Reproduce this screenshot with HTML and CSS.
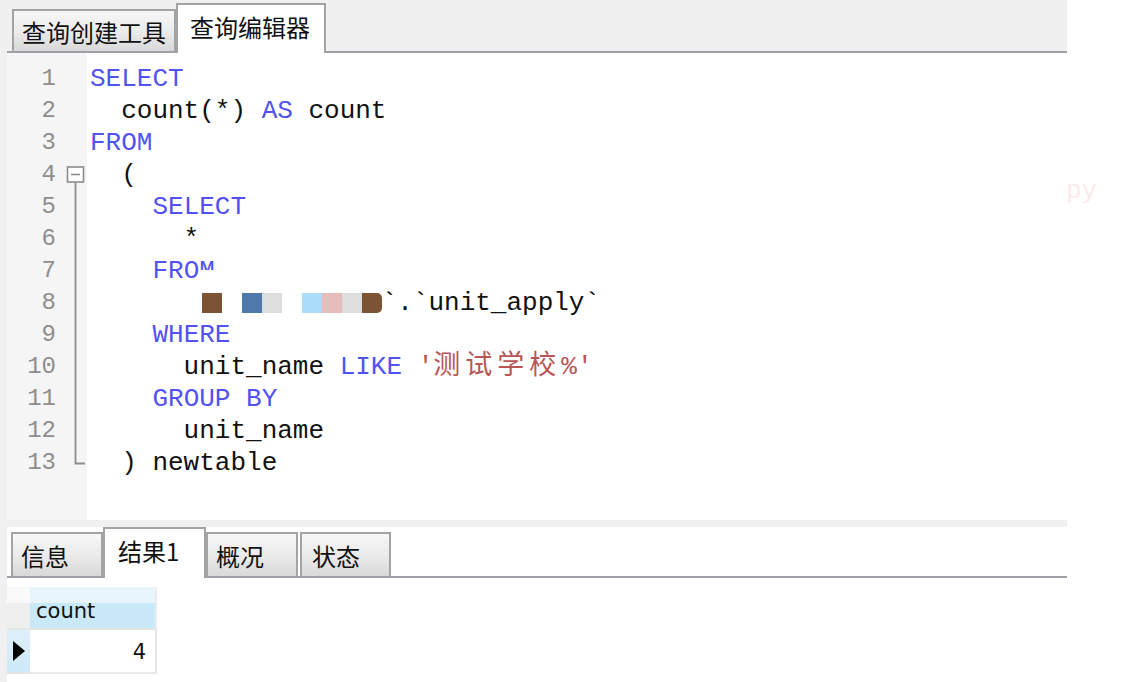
FILE: index.html
```html
<!doctype html>
<html lang="zh">

<head>
    <meta charset="utf-8">
    <title>查询编辑器</title>
    <link rel="stylesheet" href="styles.css">
</head>

<body>

    <div class="app">
        <div class="tabs tabs-top">
            <div class="tab tab-builder">查询创建工具</div>
            <div class="tab active tab-editor">查询编辑器</div>
        </div>

        <div class="editor">
            <div class="gutter">
                <div class="gline"><span class="ln">1</span><span class="fold"></span></div>
                <div class="gline"><span class="ln">2</span><span class="fold"></span></div>
                <div class="gline"><span class="ln">3</span><span class="fold"></span></div>
                <div class="gline"><span class="ln">4</span><span class="fold">
                    <svg width="31" height="32" viewBox="0 0 31 32"><rect x="11.5" y="8" width="16" height="15" fill="#fff" stroke="#8c8c8c" stroke-width="1.6"/><path d="M15 15.5H24" stroke="#8c8c8c" stroke-width="1.6"/><path d="M19.5 23V32" stroke="#8c8c8c" stroke-width="1.8"/></svg>
                </span></div>
                <div class="gline"><span class="ln">5</span><span class="fold"><svg width="31" height="32" viewBox="0 0 31 32"><path d="M19.5 0V32" stroke="#8c8c8c" stroke-width="1.8"/></svg></span></div>
                <div class="gline"><span class="ln">6</span><span class="fold"><svg width="31" height="32" viewBox="0 0 31 32"><path d="M19.5 0V32" stroke="#8c8c8c" stroke-width="1.8"/></svg></span></div>
                <div class="gline"><span class="ln">7</span><span class="fold"><svg width="31" height="32" viewBox="0 0 31 32"><path d="M19.5 0V32" stroke="#8c8c8c" stroke-width="1.8"/></svg></span></div>
                <div class="gline"><span class="ln">8</span><span class="fold"><svg width="31" height="32" viewBox="0 0 31 32"><path d="M19.5 0V32" stroke="#8c8c8c" stroke-width="1.8"/></svg></span></div>
                <div class="gline"><span class="ln">9</span><span class="fold"><svg width="31" height="32" viewBox="0 0 31 32"><path d="M19.5 0V32" stroke="#8c8c8c" stroke-width="1.8"/></svg></span></div>
                <div class="gline"><span class="ln">10</span><span class="fold"><svg width="31" height="32" viewBox="0 0 31 32"><path d="M19.5 0V32" stroke="#8c8c8c" stroke-width="1.8"/></svg></span></div>
                <div class="gline"><span class="ln">11</span><span class="fold"><svg width="31" height="32" viewBox="0 0 31 32"><path d="M19.5 0V32" stroke="#8c8c8c" stroke-width="1.8"/></svg></span></div>
                <div class="gline"><span class="ln">12</span><span class="fold"><svg width="31" height="32" viewBox="0 0 31 32"><path d="M19.5 0V32" stroke="#8c8c8c" stroke-width="1.8"/></svg></span></div>
                <div class="gline"><span class="ln">13</span><span class="fold"><svg width="31" height="32" viewBox="0 0 31 32"><path d="M19.5 0V16.5H29" fill="none" stroke="#8c8c8c" stroke-width="1.8"/></svg></span></div>
            </div>

            <div class="code">
<div class="line"><span class="kw">SELECT</span></div>
<div class="line">  count(*) <span class="kw">AS</span> count</div>
<div class="line"><span class="kw">FROM</span></div>
<div class="line">  (</div>
<div class="line">    <span class="kw">SELECT</span></div>
<div class="line">      *</div>
<div class="line">    <span class="kw">FROM</span><span class="smudge"></span></div>
<div class="line">      <span class="mask"><i class="m blank first"></i><i class="m brown"></i><i class="m blank"></i><i class="m blue"></i><i class="m grey"></i><i class="m blank"></i><i class="m sky"></i><i class="m pink"></i><i class="m grey"></i><i class="m brown last"></i></span>`.`unit_apply`</div>
<div class="line">    <span class="kw">WHERE</span></div>
<div class="line">      unit_name <span class="kw">LIKE</span> <span class="str">'<span class="cjk">测试学校</span>%'</span></div>
<div class="line">    <span class="kw">GROUP BY</span></div>
<div class="line">      unit_name</div>
<div class="line">  ) newtable</div>
            </div>
        </div>

        <div class="splitter"></div>

        <div class="tabs tabs-bottom">
            <div class="tab tab-info">信息</div>
            <div class="tab active tab-result">结果1</div>
            <div class="tab tab-profile">概况</div>
            <div class="tab tab-status">状态</div>
        </div>

        <div class="results">
            <table class="grid">
                <thead>
                    <tr>
                        <th class="corner"></th>
                        <th class="head">count</th>
                    </tr>
                </thead>
                <tbody>
                    <tr>
                        <td class="indicator"><svg width="12" height="20" viewBox="0 0 12 20"><path d="M0 0L12 10L0 20Z" fill="#000"/></svg></td>
                        <td class="cell">4</td>
                    </tr>
                </tbody>
            </table>
        </div>
    </div>

    <span class="ghost">py</span>

</body>

</html>
```

FILE: styles.css
```css
*{
    box-sizing: border-box;
}
body{
    margin: 0;
    background: #fff;
    font-family: "Noto Sans CJK SC", sans-serif;
    position: relative;
    height: 682px;
    overflow: hidden;
}
.app{
    width: 1067px;
    height: 682px;
    padding-left: 7px;
    background: #f0f0f0;
    display: flex;
    flex-direction: column;
}

/* tabs */
.tabs{
    display: flex;
    align-items: flex-end;
    border-bottom: 2px solid #9da0a5;
    flex-shrink: 0;
}
.tabs-top{
    height: 53px;
}
.tabs-bottom{
    height: 51px;
    background: #fff;
}
.tab{
    height: 42px;
    border: 2px solid #a3a3a3;
    border-bottom: 0;
    background: linear-gradient(#f7f7f7, #ebebeb 50%, #d9d9d9);
    font-size: 24px;
    color: #111;
    display: flex;
    align-items: center;
    padding-left: 8px;
    white-space: nowrap;
}
.tab.active{
    background: #fff;
    height: 50px;
    margin-bottom: -2px;
    padding-bottom: 6px;
}
.tab-builder{
    margin-left: 5px;
    width: 164px;
}
.tab-editor{
    width: 150px;
    padding-left: 12px;
}
.tabs-bottom .tab{
    height: 44px;
}
.tabs-bottom .tab.active{
    height: 51px;
    padding-bottom: 7px;
}
.tab-info{
    margin-left: 4px;
    width: 92px;
}
.tab-result{
    width: 103px;
    padding-left: 13px;
}
.tab-profile{
    width: 92px;
}
.tab-status{
    margin-left: 2px;
    width: 91px;
    padding-left: 10px;
}

/* editor */
.editor{
    height: 467px;
    display: flex;
    background: #fff;
    flex-shrink: 0;
}
.gutter{
    width: 80px;
    background: #f5f5f5;
    padding-top: 10px;
}
.gline{
    display: flex;
    height: 32px;
}
.ln{
    width: 49px;
    text-align: right;
    font: 24px/32px "Liberation Mono", monospace;
    color: #8e8e8e;
}
.fold{
    width: 31px;
    height: 32px;
}
.fold svg{
    display: block;
}
.code{
    flex: 1;
    padding-top: 10px;
    padding-left: 3px;
    font: 26px/32px "Liberation Mono", "Noto Sans CJK SC", monospace;
    color: #111;
}
.line{
    height: 32px;
    white-space: pre;
    position: relative;
}
.kw{
    color: #5252f0;
}
.str{
    color: #b85656;
}
.cjk{
    font-family: "Noto Sans CJK SC", sans-serif;
    font-size: 27px;
    line-height: 0;
    letter-spacing: 5px;
}
.smudge{
    position: absolute;
    left: 110px;
    top: 15px;
    width: 140px;
    height: 15px;
    background: #fff;
}
.mask{
    display: inline-flex;
    vertical-align: -3px;
    height: 20px;
}
.m{
    display: block;
    width: 20px;
    height: 20px;
}
.m.first{
    width: 18px;
}
.m.last{
    border-radius: 0 5px 5px 0;
}
.blank{ background: #fff; }
.brown{ background: #7d5433; }
.blue{ background: #4e79aa; }
.grey{ background: #dddddd; }
.sky{ background: #abdcf9; }
.pink{ background: #e6bdbb; }

.splitter{
    height: 7px;
    flex-shrink: 0;
}

/* results grid */
.results{
    flex: 1;
    background: #fff;
    padding-top: 9px;
}
.grid{
    border-collapse: separate;
    border-spacing: 0;
    font-family: "DejaVu Sans", sans-serif;
    color: #111;
}
.corner{
    width: 23px;
    height: 43px;
    padding: 0;
    background: linear-gradient(#f9f9f9 0 38%, #efefef 38%);
    border-bottom: 2px solid #e4e4e4;
}
.head{
    width: 127px;
    height: 43px;
    padding: 6px 0 0 6px;
    text-align: left;
    font-weight: normal;
    font-size: 21px;
    background: linear-gradient(#e7f5fd 0 38%, #c9e9f9 38%);
    border-bottom: 2px solid #e4e4e4;
    border-right: 2px solid #ececec;
}
.indicator{
    height: 44px;
    padding: 0 0 0 6px;
    background: linear-gradient(#dff0fb, #cde8f8);
    border-bottom: 2px solid #e4e4e4;
}
.indicator svg{
    display: block;
}
.cell{
    text-align: right;
    padding: 2px 9px 0 0;
    font-size: 21px;
    border-right: 2px solid #e8e8e8;
    border-bottom: 2px solid #e8e8e8;
}

.ghost{
    position: absolute;
    left: 1066px;
    top: 175px;
    font: 26px/32px "Liberation Mono", monospace;
    color: #fbebeb;
}
```
